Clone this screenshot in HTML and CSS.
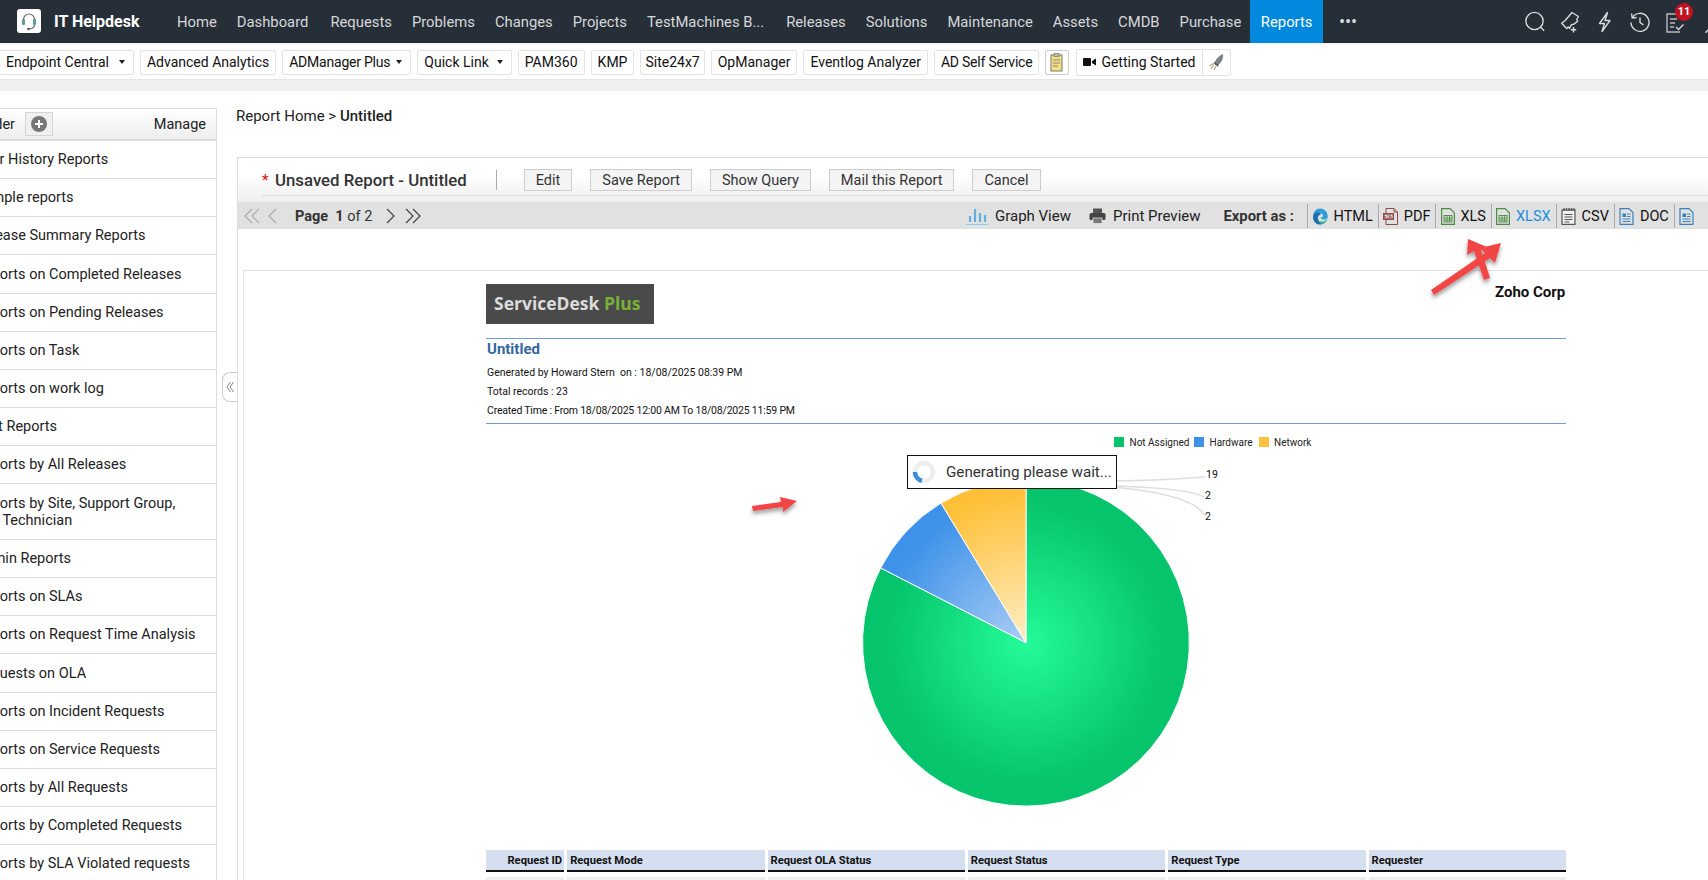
FILE: index.html
```html
<!DOCTYPE html>
<html lang="en">
<head>
<meta charset="utf-8">
<title>IT Helpdesk - Reports</title>
<link rel="stylesheet" href="styles.css">
</head>
<body>
<header class="topnav">
  <div class="brand">
    <span class="brand-logo">
      <svg width="24" height="24" viewBox="0 0 24 24" fill="none"><path d="M6.500 12V10.500a5.500 5.500 0 0 1 11 0V12" stroke="#666" stroke-width="1.200"/><rect x="5" y="10" width="3" height="6" rx="1.300" fill="#5b9a9a"/><rect x="16" y="10" width="3" height="6" rx="1.300" fill="#5b9a9a"/><path d="M17.500 16c0 2.600-2.200 3.600-5 3.800" stroke="#666" stroke-width="1.200"/><circle cx="11.500" cy="20" r="1.300" fill="#555"/></svg>
    </span>
    <span class="brand-name">IT Helpdesk</span>
  </div>
  <nav class="nav-items">
    <a class="nav-item">Home</a>
    <a class="nav-item wide">Dashboard</a>
    <a class="nav-item">Requests</a>
    <a class="nav-item">Problems</a>
    <a class="nav-item">Changes</a>
    <a class="nav-item">Projects</a>
    <a class="nav-item long">TestMachines B...</a>
    <a class="nav-item">Releases</a>
    <a class="nav-item">Solutions</a>
    <a class="nav-item">Maintenance</a>
    <a class="nav-item">Assets</a>
    <a class="nav-item">CMDB</a>
    <a class="nav-item">Purchase</a>
    <a class="nav-item active">Reports</a>
    <a class="nav-item more">&#8226;&#8226;&#8226;</a>
  </nav>
  <div class="nav-icons">
    <svg width="22" height="22" viewBox="0 0 22 22" fill="none" stroke="#d8dadc" stroke-width="1.400"><circle cx="10.500" cy="10" r="8.600"/><path d="M16.600 16.200l3.600 3.600"/></svg>
    <svg width="22" height="22" viewBox="0 0 22 22" fill="none" stroke="#d8dadc" stroke-width="1.400"><path d="M13 1.500l6.500 4-1.800 3 1 1.800-3.800 2.800-2.400.6-2 3.600-1.300-1.300-1.500 1.500-5-5.300 3.500-2.700z" stroke-linejoin="round"/><path d="M14.500 16v5.500M11.800 18.800h5.400"/></svg>
    <svg width="22" height="22" viewBox="0 0 22 22" fill="none" stroke="#d8dadc" stroke-width="1.400"><path d="M13.500 1.500L5.500 12.500h5l-2.500 8 8-11h-5z" stroke-linejoin="round"/></svg>
    <svg width="22" height="22" viewBox="0 0 22 22" fill="none" stroke="#d8dadc" stroke-width="1.400"><path d="M3.400 6.500a9 9 0 1 1-1.400 5"/><path d="M2.600 2.500l.6 4.400 4.400-.4"/><path d="M11 6.500v5l3.400 2.400"/></svg>
    <span class="task-icon">
      <svg width="22" height="24" viewBox="0 0 22 24" fill="none" stroke="#b9bcbf" stroke-width="1.400"><path d="M16 22H3V4h13"/><path d="M6 9h7M6 13h5M6 17h4"/><path d="M12 17l2.500 2.500 5-5" stroke="#d8dadc"/></svg>
      <span class="badge">11</span>
    </span>
    <svg width="22" height="22" viewBox="0 0 22 22" fill="none" stroke="#d8dadc" stroke-width="1.400"><path d="M7 27v-6l4-4"/></svg>
  </div>
</header>

<section class="quickbar">
  <a class="qbtn first">Endpoint Central<i class="caret"></i></a>
  <a class="qbtn">Advanced Analytics</a>
  <a class="qbtn tight">ADManager Plus<i class="caret short"></i></a>
  <a class="qbtn">Quick Link<i class="caret"></i></a>
  <a class="qbtn">PAM360</a>
  <a class="qbtn">KMP</a>
  <a class="qbtn slim">Site24x7</a>
  <a class="qbtn">OpManager</a>
  <a class="qbtn">Eventlog Analyzer</a>
  <a class="qbtn tight">AD Self Service</a>
  <a class="qbtn note">
    <svg width="13" height="19" viewBox="0 0 13 19"><rect x="1" y="2" width="11" height="16" fill="#f4de7e" stroke="#777" stroke-width="1"/><rect x="4" y="0.500" width="5" height="3" fill="#bbb" stroke="#777" stroke-width=".7"/><path d="M3 7h7M3 10h7M3 13h5" stroke="#888" stroke-width="1"/></svg>
  </a>
  <div class="started">
    <a class="started-label">
      <svg width="13" height="10" viewBox="0 0 13 10"><rect x="0" y="1" width="8" height="8" rx="1" fill="#111"/><path d="M9 4l4-2.500v7L9 6z" fill="#111"/></svg>
      Getting Started
    </a>
    <a class="rocket">
      <svg width="16" height="18" viewBox="0 0 16 18"><path d="M14 1c.5 4-1 7.500-4 10.500L6 8.500C8 5 10.500 2.200 14 1z" fill="#7d8288"/><path d="M6 8.500l4 3-1.200 2.300-4.300-3.300z" fill="#5f6368"/><path d="M5 11.500L2 16M7 13l-2 4M4 10.500L1 13" stroke="#b9a98a" stroke-width="1.200"/></svg>
    </a>
  </div>
</section>
<div class="strip"></div>

<div class="page">
  <aside class="sidebar">
    <div class="side-head">
      <span class="side-folder">Folder</span>
      <span class="add-btn"><svg width="16" height="16" viewBox="0 0 16 16"><circle cx="8" cy="8" r="8" fill="#777"/><path d="M8 4v8M4 8h8" stroke="#fff" stroke-width="2"/></svg></span>
      <span class="side-manage">Manage</span>
    </div>
    <ul class="side-list">
      <li>User History Reports</li>
      <li>Sample reports</li>
      <li>Release Summary Reports</li>
      <li>Reports on Completed Releases</li>
      <li>Reports on Pending Releases</li>
      <li>Reports on Task</li>
      <li>Reports on work log</li>
      <li>Test Reports</li>
      <li>Reports by All Releases</li>
      <li class="two-line">Reports by Site, Support Group, and Technician</li>
      <li>Admin Reports</li>
      <li>Reports on SLAs</li>
      <li>Reports on Request Time Analysis</li>
      <li>Requests on OLA</li>
      <li>Reports on Incident Requests</li>
      <li>Reports on Service Requests</li>
      <li>Reports by All Requests</li>
      <li>Reports by Completed Requests</li>
      <li>Reports by SLA Violated requests</li>
    </ul>
  </aside>

  <span class="collapse-handle">
    <svg width="8" height="12" viewBox="0 0 8 12" fill="none" stroke="#888" stroke-width="1"><path d="M4.500 1L1 6l3.500 5M7.500 1L4 6l3.500 5"/></svg>
  </span>

  <main class="content">
    <div class="crumb">Report Home &gt; <b>Untitled</b></div>
    <section class="panel">
      <div class="title-row">
        <div class="title-inner">
          <span class="star">*</span>
          <span class="report-title">Unsaved Report - Untitled</span>
          <span class="title-sep"></span>
          <a class="tbtn">Edit</a>
          <a class="tbtn">Save Report</a>
          <a class="tbtn">Show Query</a>
          <a class="tbtn">Mail this Report</a>
          <a class="tbtn">Cancel</a>
        </div>
      </div>
      <div class="toolbar">
        <div class="pager">
          <svg class="pg-first" width="18" height="16" viewBox="0 0 18 16" fill="none" stroke="#aaa" stroke-width="1.200"><path d="M9 1L2 8l7 7M16 1L9 8l7 7"/></svg>
          <svg class="pg-prev" width="10" height="16" viewBox="0 0 10 16" fill="none" stroke="#aaa" stroke-width="1.200"><path d="M8 1L1 8l7 7"/></svg>
          <span class="pg-text"><b>Page &nbsp;1</b> of 2</span>
          <svg class="pg-next" width="10" height="16" viewBox="0 0 10 16" fill="none" stroke="#444" stroke-width="1.200"><path d="M2 1l7 7-7 7"/></svg>
          <svg class="pg-last" width="18" height="16" viewBox="0 0 18 16" fill="none" stroke="#444" stroke-width="1.200"><path d="M2 1l7 7-7 7M9 1l7 7-7 7"/></svg>
        </div>
        <a class="tool">
          <svg width="22" height="18" viewBox="0 0 22 18"><path d="M4 9v6M9 2v13M14 6v9M19 8v7" stroke="#5fb0de" stroke-width="2.200"/><path d="M0 17.500h22" stroke="#8ccbe9" stroke-width="1.200"/></svg>
          Graph View
        </a>
        <a class="tool print">
          <svg width="17" height="16" viewBox="0 0 17 16"><rect x="4" y="0.500" width="9" height="5" fill="#555"/><rect x="0.500" y="5" width="16" height="7" rx="1.500" fill="#444"/><rect x="4" y="10" width="9" height="5.500" fill="#777" stroke="#eee" stroke-width=".7"/></svg>
          Print Preview
        </a>
        <span class="export-label">Export as :</span>
        <a class="export">
          <svg width="16" height="17" viewBox="0 0 16 17"><path d="M8 .5a7.800 7.800 0 0 1 7.800 8c0 2-1.600 3-3.500 3-2.300 0-3.800-.8-3.800-2 .8 0 2.500-.4 2.500-2S8.500 4 6 4.500C3 5.200 1.800 6.800 1 8.500 1.300 3.800 4 .5 8 .5z" fill="#2f9ed8"/><path d="M1 8.500c.5-2.500 2.500-4.200 5-4.200 2.300 0 3.500 1.300 2.500 2.500-2 .6-3 2-2.500 4 .4 2.500 3 5 6.500 4-1.300 1-3 1.800-4.500 1.800C4 16.600.7 13 1 8.500z" fill="#1a6fb0"/><path d="M15.800 9c-.3 3-1.800 5.500-3.800 6.600-3 .6-5.200-1-5.800-3.100 1.500 1.200 3.500 1.200 5.500.8 2-.4 3.800-2 4.100-4.300z" fill="#39c08e"/></svg>
          HTML
        </a>
        <a class="export">
          <svg width="15" height="17" viewBox="0 0 15 17" fill="none" stroke="#8e4a46" stroke-width="1"><path d="M3 6V.5h8l3.500 3.500v12.500H3V12"/><path d="M11 .5v3.500h3.500"/><rect x=".5" y="5.500" width="10" height="6" fill="#a77"/><path d="M2 7.500h1.500v2M5 7v3M7.500 7.500h1.500v2" stroke="#fff" stroke-width=".8"/></svg>
          PDF
        </a>
        <a class="export">
          <svg width="14" height="17" viewBox="0 0 14 17" fill="none" stroke="#4f8a45" stroke-width="1.200"><path d="M.6.600h8.500l4.300 4.300v11.500H.6z"/><rect x="3" y="7.500" width="8" height="6.500" fill="#cfe0ca" stroke-width=".9"/><path d="M3 10h8M3 12h8M6 7.500V14M8.500 7.500V14" stroke-width=".8"/></svg>
          XLS
        </a>
        <a class="export xlsx">
          <svg width="14" height="17" viewBox="0 0 14 17" fill="none" stroke="#4f8a45" stroke-width="1.200"><path d="M.6.600h8.500l4.300 4.300v11.500H.6z"/><rect x="3" y="7.500" width="8" height="6.500" fill="#cfe0ca" stroke-width=".9"/><path d="M3 10h8M3 12h8M6 7.500V14M8.500 7.500V14" stroke-width=".8"/></svg>
          XLSX
        </a>
        <a class="export">
          <svg width="15" height="17" viewBox="0 0 15 17" fill="none" stroke="#555" stroke-width="1.200"><rect x="1" y="2" width="13" height="14.400" fill="#f0f0f0"/><path d="M3 0v3M5.500 0v3M8 0v3M10.500 0v3M13 0v3" stroke-width="1.300"/><path d="M3.500 6.500h8M3.500 9h8M3.500 11.500h8M3.500 14h5" stroke-width="1"/></svg>
          CSV
        </a>
        <a class="export">
          <svg width="15" height="17" viewBox="0 0 15 17" fill="none" stroke="#3b82bd" stroke-width="1.200"><path d="M1 .6h9l4 4v11.800H1z"/><rect x="3.500" y="5.500" width="3.500" height="3.500" fill="#3b82bd" stroke="none"/><path d="M8 6h3.500M8 8.500h3.500M3.500 11h8M3.500 13.500h8" stroke-width="1"/></svg>
          DOC
        </a>
        <a class="export">
          <svg width="15" height="17" viewBox="0 0 15 17" fill="none" stroke="#3b82bd" stroke-width="1.200"><path d="M1 .6h9l4 4v11.800H1z"/><rect x="3.500" y="5.500" width="3.500" height="3.500" fill="#3b82bd" stroke="none"/><path d="M8 6h3.500M8 8.500h3.500M3.500 11h8M3.500 13.500h8" stroke-width="1"/></svg>
        </a>
      </div>

      <div class="sheet">
        <div class="report">
          <div class="report-logo">ServiceDesk <span>Plus</span></div>
          <div class="report-meta">
            <h2>Untitled</h2>
            <p>Generated by Howard Stern &nbsp;on : 18/08/2025 08:39 PM</p>
            <p>Total records : 23</p>
            <p class="narrow">Created Time : From 18/08/2025 12:00 AM To 18/08/2025 11:59 PM</p>
          </div>
          <div class="chart">
            <svg class="chart-svg" width="1080" height="426" viewBox="486 424 1080 426">
              <defs>
                <radialGradient id="gGreen" gradientUnits="userSpaceOnUse" cx="1026" cy="642.700" r="163.400">
                  <stop offset="0" stop-color="#25fb98"/><stop offset=".85" stop-color="#06c56d"/><stop offset="1" stop-color="#05c46b"/>
                </radialGradient>
                <radialGradient id="gBlue" gradientUnits="userSpaceOnUse" cx="1026" cy="642.700" r="163.400">
                  <stop offset="0" stop-color="#abcdf5"/><stop offset=".9" stop-color="#3e92e9"/><stop offset="1" stop-color="#3d91e8"/>
                </radialGradient>
                <radialGradient id="gYellow" gradientUnits="userSpaceOnUse" cx="1026" cy="642.700" r="163.400">
                  <stop offset="0" stop-color="#ffeec6"/><stop offset=".9" stop-color="#ffc13b"/><stop offset="1" stop-color="#ffbf36"/>
                </radialGradient>
              </defs>
              <rect x="1114" y="437" width="10" height="10" fill="#05c46b"/>
              <text class="legend" x="1129.500" y="446">Not Assigned</text>
              <rect x="1194" y="437" width="10" height="10" fill="#3d91e8"/>
              <text class="legend" x="1209.500" y="446">Hardware</text>
              <rect x="1259" y="437" width="10" height="10" fill="#ffc13b"/>
              <text class="legend" x="1274" y="446">Network</text>
              <path d="M1100 481C1150 481 1180 479 1205 477" class="leader"/>
              <path d="M1060 484C1130 486 1190 488 1204 497" class="leader"/>
              <path d="M1026 480C1120 486 1194 492 1205 516" class="leader"/>
              <text class="pie-label" x="1206" y="478">19</text>
              <text class="pie-label" x="1205" y="499">2</text>
              <text class="pie-label" x="1205" y="520">2</text>
              <path d="M1026 642.700V479.300A163.400 163.400 0 1 1 880.700 567.900Z" fill="url(#gGreen)" stroke="#fff" stroke-width="1"/>
              <path d="M1026 642.700L880.700 567.900A163.400 163.400 0 0 1 941 503.100Z" fill="url(#gBlue)" stroke="#fff" stroke-width="1"/>
              <path d="M1026 642.700L941 503.100A163.400 163.400 0 0 1 1026 479.300Z" fill="url(#gYellow)" stroke="#fff" stroke-width="1"/>
            </svg>
            <div class="generating">
              <svg width="24" height="24" viewBox="0 0 24 24" fill="none"><circle cx="12" cy="12" r="9" stroke="#eeeeee" stroke-width="4.500"/><path d="M3 12a9 9 0 0 0 7 8.800" stroke="#3b8fd6" stroke-width="4.500"/></svg>
              <span>Generating please wait...</span>
            </div>
          </div>
          <table class="report-table">
            <thead>
              <tr>
                <th class="col-id">Request ID</th>
                <th>Request Mode</th>
                <th>Request OLA Status</th>
                <th>Request Status</th>
                <th>Request Type</th>
                <th>Requester</th>
              </tr>
            </thead>
            <tbody>
              <tr><td></td><td></td><td></td><td></td><td></td><td></td></tr>
            </tbody>
          </table>
        </div>
      </div>
    </section>
  </main>
</div>

<svg class="annotations" width="1708" height="880" viewBox="0 0 1708 880">
  <defs><filter id="shadow" x="-30%" y="-30%" width="160%" height="160%"><feDropShadow dx="0" dy="3" stdDeviation="2" flood-color="#000" flood-opacity=".4"/></filter></defs>
  <g fill="#f24444" filter="url(#shadow)">
    <path d="M1431 290L1485 253 1480 248 1501 243 1495 263 1490 258 1434 295Z"/>
    <path d="M1484 280L1474 251 1467 255 1468 239 1487 247 1481 250 1490 278Z"/>
    <path d="M752 506L781 502 780 497 797 501 783 512 783 507 753 511Z"/>
  </g>
  <text class="note-text" x="1495" y="297">Zoho Corp</text>
</svg>
</body>
</html>
```
FILE: styles.css
```css
* { box-sizing: border-box; }
html, body { margin: 0; padding: 0; }
body {
  position: relative;
  width: 1708px;
  height: 880px;
  overflow: hidden;
  background: #fff;
  color: #222;
  font-family: Roboto, "Liberation Sans", sans-serif;
  font-size: 14px;
}
a { color: inherit; text-decoration: none; }

/* top navigation */
.topnav {
  display: flex;
  align-items: stretch;
  height: 43px;
  background: #262e38;
  color: #d6d8da;
  padding-left: 17px;
}
.brand { display: flex; align-items: center; width: 150px; padding-bottom: 1px; }
.brand-logo {
  display: flex;
  width: 24px;
  height: 24px;
  background: #fff;
  border-radius: 3px;
  margin-right: 13px;
}
.brand-name { color: #fff; font-size: 16px; font-weight: 700; }
.nav-items { display: flex; align-items: stretch; }
.nav-item { display: flex; align-items: center; padding: 0 10px; font-size: 14.800px; white-space: nowrap; }
.nav-item.wide { margin-right: 2px; }
.nav-item.long { margin-right: 2px; }
.nav-item.active { background: #0288dc; color: #fff; margin-left: -1px; padding: 0 10.500px; }
.nav-item.more { font-size: 18px; padding-left: 16px; }
.nav-icons { display: flex; align-items: center; gap: 13px; margin-left: auto; margin-right: -13px; }
.task-icon { position: relative; display: flex; }
.badge {
  position: absolute;
  left: 11px;
  top: -7px;
  width: 18px;
  height: 18px;
  border-radius: 50%;
  background: #c1121f;
  color: #fff;
  font-size: 11px;
  font-weight: 700;
  line-height: 18px;
  text-align: center;
}

/* quick links */
.quickbar {
  display: flex;
  align-items: center;
  gap: 6px;
  height: 37px;
  padding-top: 2px;
  margin-left: -3px;
  background: #fff;
  border-bottom: 1px solid #e6e6e6;
  box-shadow: inset 0 3px 3px -3px rgba(0,0,0,.15);
}
.qbtn {
  display: flex;
  align-items: center;
  height: 25px;
  padding: 0 6px;
  border: 1px solid #e4e4e4;
  border-radius: 2px;
  color: #111;
  white-space: nowrap;
}
.qbtn.first { padding-left: 8px; }
.qbtn.tight { letter-spacing: -.22px; }
.qbtn.slim { padding: 0 4px; }
.caret {
  display: inline-block;
  margin-left: 8px;
  margin-right: 2px;
  border-left: 3.500px solid transparent;
  border-right: 3.500px solid transparent;
  border-top: 4px solid #222;
}
.qbtn.first .caret { margin-left: 10px; }
.caret.short { margin-left: 6px; }
.qbtn.note { padding: 0 4px; border-color: #ccc; width: 24px; }
.started { display: flex; align-items: stretch; height: 27px; border: 1px solid #e4e4e4; border-radius: 2px; margin-left: 1px; }
.started-label { display: flex; align-items: center; gap: 5px; padding: 0 6px; color: #111; white-space: nowrap; }
.rocket { display: flex; align-items: center; padding: 0 5px 0 6px; border-left: 1px solid #e4e4e4; }
.strip { height: 11px; background: #f0f0f0; }

/* page */
.page { position: relative; display: flex; align-items: flex-start; }
.sidebar {
  flex: none;
  width: 260px;
  margin-left: -43px;
  margin-top: 17px;
  border: 1px solid #ddd;
  border-bottom: 0;
}
.side-head {
  display: flex;
  align-items: center;
  height: 32px;
  padding: 0 10px 0 0;
  background: linear-gradient(#fff, #eee);
  border-bottom: 2px solid #ddd;
  color: #222;
  font-size: 14.500px;
}
.side-folder { margin-left: 1px; width: 56px; text-align: right; }
.add-btn {
  display: flex;
  align-items: center;
  justify-content: center;
  width: 28px;
  height: 24px;
  margin-left: 10px;
  border: 1px solid #d5d5d5;
  background: #f0f0f0;
}
.side-manage { margin-left: auto; }
.side-list { list-style: none; margin: 0; padding: 0; font-size: 14.500px; color: #222; }
.side-list li {
  display: flex;
  align-items: center;
  height: 38.170px;
  padding: 0 15px 0 17px;
  border-bottom: 1px solid #ddd;
  line-height: 17px;
}
.side-list li.two-line { height: 55.600px; }
.collapse-handle {
  position: absolute;
  left: 222px;
  top: 281px;
  display: flex;
  align-items: center;
  justify-content: center;
  width: 15px;
  height: 30px;
  background: #fff;
  border: 1px solid #ccc;
  border-right: 0;
  border-radius: 8px 0 0 8px;
}
.content { flex: none; width: 1540px; margin-left: 19px; }
.crumb { height: 66px; padding-top: 16px; font-size: 15px; color: #222; line-height: 18px; }
.crumb b { font-weight: 500; }

/* panel */
.panel { margin-left: 1px; border-top: 1px solid #ddd; border-left: 1px solid #ddd; }
.title-row { height: 44px; padding-left: 24px; background: linear-gradient(#fff 40%, #eee); }
.title-inner {
  display: flex;
  align-items: center;
  height: 38px;
  padding-top: 7px;
  border-bottom: 1px solid #ddd;
  white-space: nowrap;
}
.star { color: #e02020; font-weight: 700; width: 13px; }
.report-title { font-size: 16.800px; font-weight: 500; color: #333; }
.title-sep { width: 1px; height: 20px; background: #aaa; margin: 0 27px 0 29px; }
.tbtn {
  display: flex;
  align-items: center;
  height: 22px;
  margin-right: 18px;
  padding: 0 11px;
  border: 1px solid #ccc;
  background: #f4f4f4;
  color: #333;
  font-size: 14.500px;
}
.toolbar {
  display: flex;
  align-items: center;
  height: 27px;
  background: #e1e1e1;
  white-space: nowrap;
}
.pager { display: flex; align-items: center; width: 728px; padding-left: 5px; }
.pg-prev { margin-left: 7px; }
.pg-text { margin-left: 17px; padding-top: 1px; color: #333; font-size: 14.500px; }
.pg-text b { font-weight: 700; }
.pg-next { margin-left: 13px; }
.pg-last { margin-left: 9px; }
.tool { display: flex; align-items: center; gap: 7px; color: #222; font-size: 15px; padding-top: 1px; }
.tool.print { margin-left: 18px; }
.export-label { margin-left: 12px; padding: 4px 11px 3px; width: 94px; font-weight: 700; color: #333; font-size: 14.800px; }
.export {
  display: flex;
  align-items: center;
  gap: 5.500px;
  height: 24px;
  padding: 1px 5px 0 4.500px;
  border-left: 1px solid #aaa;
  color: #111;
  font-size: 14.500px;
}
.export.xlsx { color: #1a8fe0; }

/* report */
.sheet {
  margin: 41px 0 0 5px;
  padding: 13px 0 0 242px;
  border-top: 1px solid #e4e4e4;
  border-left: 1px solid #e4e4e4;
}
.report { width: 1080px; }
.report-logo {
  width: 168px;
  height: 40px;
  padding-left: 8px;
  background: #4a4a4a;
  color: #dcdcdc;
  font-family: "Open Sans", sans-serif;
  font-size: 17.500px;
  font-weight: 700;
  line-height: 39px;
  white-space: nowrap;
}
.report-logo span { color: #78b038; }
.report-meta {
  margin-top: 14px;
  height: 86px;
  border-top: 1px solid #6f9bd8;
  border-bottom: 1px solid #6f9bd8;
  padding-left: 1px;
  color: #111;
}
.report-meta h2 { margin: 0; height: 22px; color: #33689f; font-size: 15px; font-weight: 700; line-height: 21px; }
.report-meta p { margin: 0; height: 19px; font-size: 10.500px; line-height: 23px; white-space: nowrap; }
.report-meta p.narrow { letter-spacing: -.2px; }
.chart { position: relative; height: 426px; }
.chart-svg { display: block; }
.legend { font-size: 10px; fill: #222; font-family: Roboto, sans-serif; }
.pie-label { font-size: 10.500px; fill: #111; font-family: Roboto, sans-serif; }
.leader { fill: none; stroke: #ddd; stroke-width: 1.500; }
.generating {
  position: absolute;
  left: 421px;
  top: 31px;
  display: flex;
  align-items: center;
  gap: 10px;
  width: 210px;
  height: 34px;
  padding-left: 4px;
  background: #fff;
  border: 1.500px solid #111;
  color: #333;
  font-size: 15.200px;
  white-space: nowrap;
}
.report-table {
  margin: -5px 0 0 -3px;
  border-collapse: separate;
  border-spacing: 3px 5px;
  table-layout: fixed;
  width: 1086px;
}
.report-table th {
  width: 197px;
  height: 22px;
  padding: 1px 3px 0;
  background: #d5dfef;
  border-bottom: 2px solid #111;
  color: #111;
  font-size: 11.200px;
  font-weight: 700;
  text-align: left;
}
.report-table th.col-id { width: 78px; text-align: right; padding-right: 2px; }
.report-table td { height: 22px; background: #eee; }

/* annotations lying over the page */
.annotations { position: absolute; left: 0; top: 0; pointer-events: none; }
.note-text { font-family: Roboto, sans-serif; font-size: 15px; font-weight: 700; fill: #111; }
```
